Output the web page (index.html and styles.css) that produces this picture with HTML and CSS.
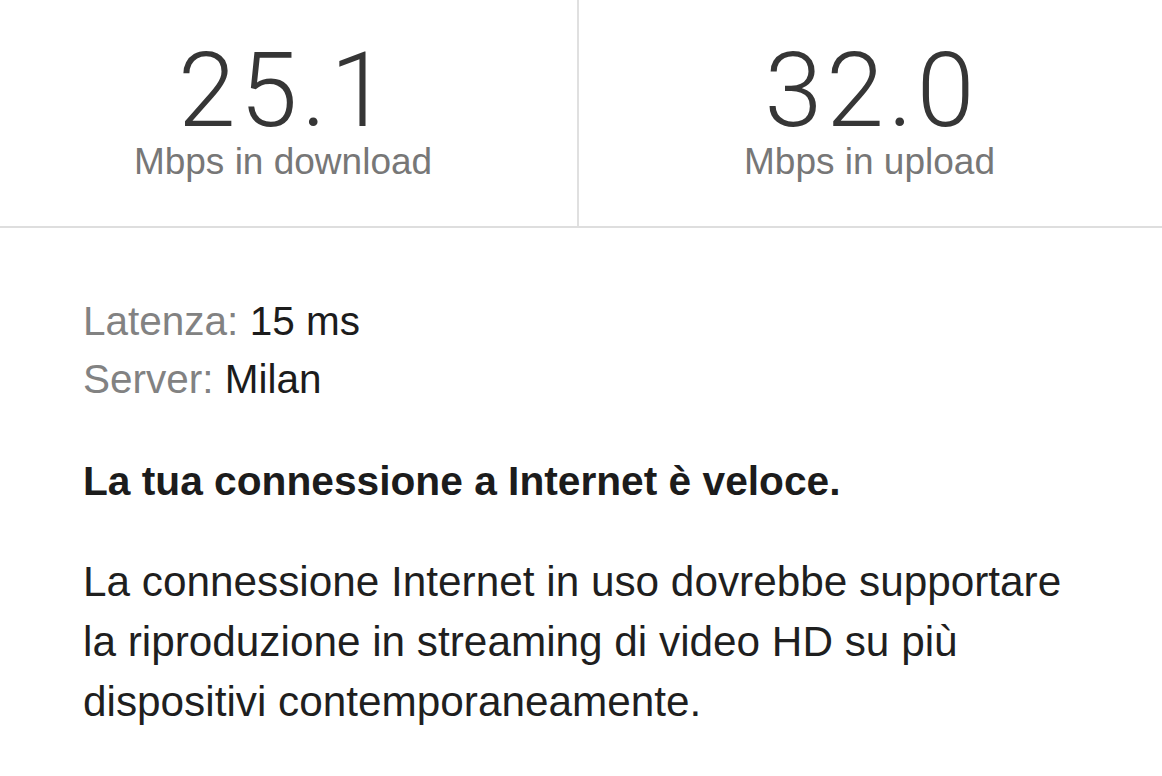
FILE: index.html
```html
<!DOCTYPE html>
<html lang="it">
<head>
<meta charset="utf-8">
<title>Speed test</title>
<link rel="stylesheet" href="styles.css">
</head>
<body>
<section class="stats">
  <div class="stat stat-down">
    <div class="stat-value">25.1</div>
    <div class="stat-label">Mbps in download</div>
  </div>
  <div class="stat stat-up">
    <div class="stat-value">32.0</div>
    <div class="stat-label">Mbps in upload</div>
  </div>
</section>
<section class="details">
  <div class="meta">
    <div class="meta-row"><span class="meta-key">Latenza:</span> <span class="meta-val">15 ms</span></div>
    <div class="meta-row"><span class="meta-key">Server:</span> <span class="meta-val">Milan</span></div>
  </div>
  <p class="verdict">La tua connessione a Internet è veloce.</p>
  <p class="desc">La connessione Internet in uso dovrebbe supportare la riproduzione in streaming di video HD su più dispositivi contemporaneamente.</p>
</section>
</body>
</html>
```

FILE: styles.css
```css
* { box-sizing: border-box; }
html, body { margin: 0; padding: 0; background: #fff; }
body {
  font-family: "Liberation Sans", Arial, sans-serif;
  color: #1d1d1f;
  width: 1162px;
}
.stats {
  display: grid;
  grid-template-columns: 577px 1fr;
  border-bottom: 2px solid #dedede;
}
.stat {
  height: 226px;
  padding-top: 41px;
  display: flex;
  flex-direction: column;
  align-items: center;
}
.stat-down {
  border-right: 2px solid #e0e0e0;
  padding-right: 11px;
  width: 579px;
}
.stat-value {
  font-family: "Roboto", "Liberation Sans", sans-serif;
  font-weight: 300;
  font-size: 104px;
  line-height: 100px;
  letter-spacing: 4px;
  margin-right: -4px;
  color: #363636;
}
.stat-label {
  font-size: 37px;
  line-height: 42px;
  color: #777;
}
.details {
  padding: 64px 70px 0 83px;
}
.meta-row {
  font-size: 40.5px;
  line-height: 58px;
}
.meta-key { color: #828282; }
.meta-val { color: #1c1c1c; }
.verdict {
  margin: 44px 0 0;
  font-size: 40.7px;
  line-height: 58px;
  font-weight: 700;
  color: #1c1c1c;
}
.desc {
  margin: 42px 0 0;
  font-size: 42.3px;
  line-height: 60px;
  color: #1f1f1f;
}
```
